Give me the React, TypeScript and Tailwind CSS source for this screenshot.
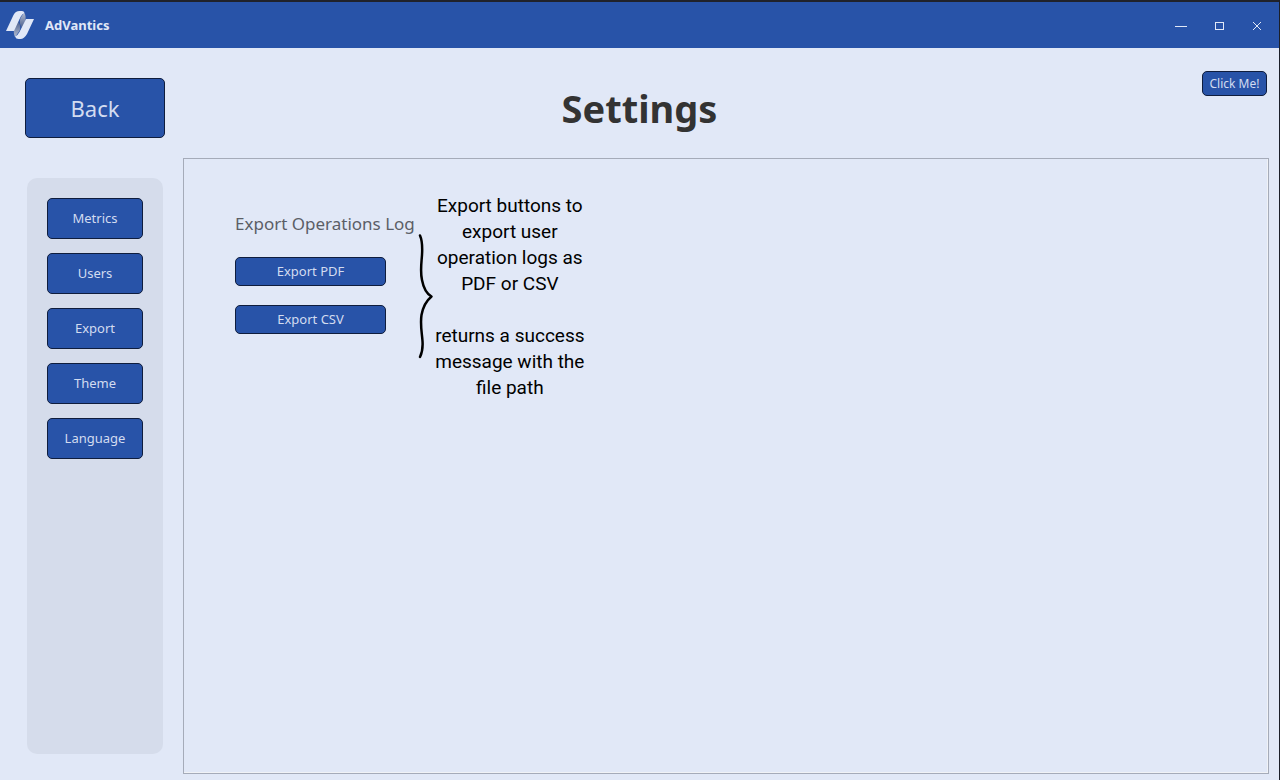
import type { ButtonHTMLAttributes } from "react";

const sections = ["Metrics", "Users", "Export", "Theme", "Language"];

function Button({ className = "", ...rest }: ButtonHTMLAttributes<HTMLButtonElement>) {
  return (
    <button
      type="button"
      className={`shrink-0 border border-[#0f1d3d] bg-[#2853a8] text-[#d3dcf0] hover:bg-[#3160bb] ${className}`}
      {...rest}
    />
  );
}

function Logo() {
  return (
    <svg width="30" height="30" viewBox="0 0 30 30" aria-hidden="true">
      <defs>
        <linearGradient id="foldTop" x1="0" y1="0" x2="0" y2="1">
          <stop offset="0" stopColor="#b4bdd0" />
          <stop offset="1" stopColor="#4a5f8f" />
        </linearGradient>
        <linearGradient id="foldBottom" x1="0" y1="0" x2="0" y2="1">
          <stop offset="0" stopColor="#4a5f8f" />
          <stop offset="1" stopColor="#b4bdd0" />
        </linearGradient>
      </defs>
      <path d="M19 2.500C21 5 21 8 20 12L17 18C15 15 14 12 15.500 8Z" fill="url(#foldTop)" />
      <path d="M10 27C8.500 24 8.500 21 9.500 18L13 11.500C15 14 16 17 14.500 21Z" fill="url(#foldBottom)" />
      <path d="M1 21L8.500 5Q10.500 1 14.500 1H17Q19 1 19.500 3Q17 4 15.500 7L9 21Z" fill="#e1e8f7" />
      <path d="M29 9L22 24Q19 29 15.500 29H13.500Q11 29 10 26.500Q13 25 14.500 22L21 9Z" fill="#e1e8f7" />
    </svg>
  );
}

function TitleBar() {
  const control = "flex h-8 w-8 items-center justify-center text-[#e1e8f7]";
  return (
    <header className="flex h-12 shrink-0 items-center border-t-2 border-[#20222b] bg-[#2853a8] pr-[6px] pl-[5px]">
      <Logo />
      <span className="mt-[2px] ml-[10px] text-[13px] font-bold text-[#e1e8f7]">AdVantics</span>
      <div className="mt-[2px] ml-auto flex gap-[6px]">
        <button type="button" aria-label="Minimize" className={control}>
          <svg width="12" height="12" viewBox="0 0 12 12" stroke="currentColor">
            <path d="M0 6.500H12" />
          </svg>
        </button>
        <button type="button" aria-label="Maximize" className={control}>
          <svg width="10" height="10" viewBox="0 0 10 10" fill="none" stroke="currentColor">
            <rect x="1.500" y="1.500" width="8" height="7" />
          </svg>
        </button>
        <button type="button" aria-label="Close" className={control}>
          <svg width="10" height="10" viewBox="0 0 10 10" stroke="currentColor">
            <path d="M1 1L9 9M9 1L1 9" />
          </svg>
        </button>
      </div>
    </header>
  );
}

export default function App() {
  return (
    <div className="flex min-h-dvh flex-col border-r border-[#1b1f29] bg-[#e1e8f7] font-['Noto_Sans','Open_Sans',sans-serif]">
      <TitleBar />
      <div className="flex flex-1 flex-col">
        <div className="grid grid-cols-[1fr_auto_1fr] items-start px-3 pb-5">
          <Button className="mt-[30px] ml-[13px] h-[60px] w-[140px] rounded-[5px] text-[22px]">Back</Button>
          <h1 className="mt-[30px] text-[38px] leading-[60px] font-bold text-[#333333]">Settings</h1>
          <Button className="mt-[23px] h-[25px] w-[65px] justify-self-end rounded-[5px] text-xs">Click Me!</Button>
        </div>
        <main className="flex flex-1 gap-5 pr-[10px] pb-[6px] pl-[27px]">
          <nav
            aria-label="Settings sections"
            className="mt-5 mb-5 flex w-[136px] shrink-0 flex-col gap-[14px] rounded-[10px] bg-[#d5dceb] p-5"
          >
            {sections.map((name) => (
              <Button key={name} className="h-[41px] rounded-[5px] text-[13px]">
                {name}
              </Button>
            ))}
          </nav>
          <section className="flex flex-1 items-start border border-[#a5abb9] pt-[34px] pl-[51px] shadow-[inset_-1px_-1px_0_#f0f2f6]">
            <div className="mt-[15px] flex flex-col items-start">
              <h2 className="text-[17px] leading-8 text-[#5b5e66]">Export Operations Log</h2>
              <Button className="mt-[17px] h-[29px] w-[151px] rounded-[5px] text-[13px]">Export PDF</Button>
              <Button className="mt-[19px] h-[29px] w-[151px] rounded-[5px] text-[13px]">Export CSV</Button>
            </div>
            <svg
              className="mt-[40px] ml-[3px] shrink-0"
              width="16"
              height="128"
              viewBox="0 0 16 128"
              fill="none"
              stroke="#000"
              strokeWidth="2.500"
              strokeLinecap="round"
              strokeLinejoin="round"
              aria-hidden="true"
            >
              <path d="M2 2.500C4 7 4.500 14 4 22C3.500 30 2 38 4 47C5.500 55 9 61 13.500 63.500C8 68 5 74 3.500 82C2 92 4 100 4.500 108C5 115 4 120 2 124" />
            </svg>
            <div className="w-[152px] text-center font-[Roboto,sans-serif] text-[19px] leading-[26px] text-black">
              <p>Export buttons to export user operation logs as PDF or CSV</p>
              <p className="mt-[26px]">returns a success message with the file path</p>
            </div>
          </section>
        </main>
      </div>
    </div>
  );
}
